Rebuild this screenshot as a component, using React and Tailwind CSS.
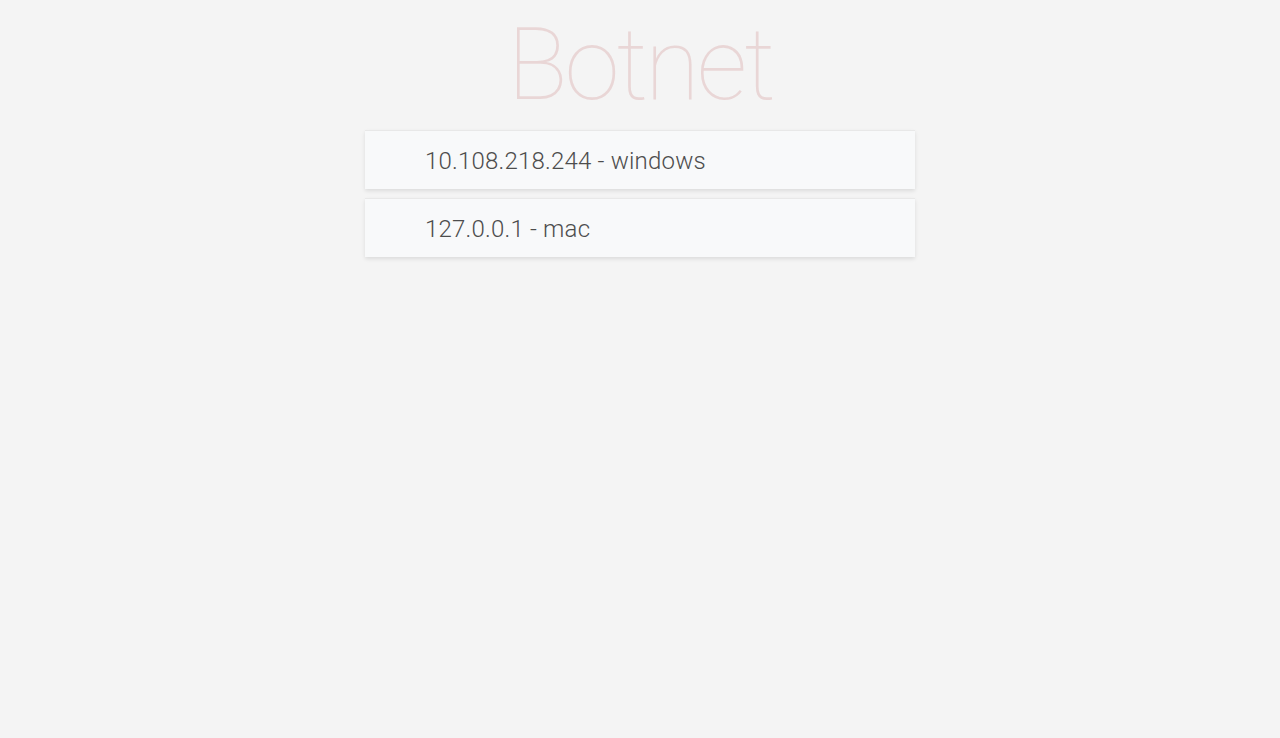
import React from "react";

const bots = [
  { ip: "10.108.218.244", os: "windows" },
  { ip: "127.0.0.1", os: "mac" },
];

const App = () => {
  return (
    <div
      className="min-h-screen bg-[#f4f4f4] text-[#4d4d4d]"
      style={{ fontFamily: "Roboto, 'Liberation Sans', sans-serif" }}
    >
      <div className="mx-auto w-[550px]">
        <h1 className="h-[130px] pt-[5px] text-center text-[100px] font-thin leading-[120px] tracking-[-3px] text-[rgba(175,47,47,0.15)]">
          Botnet
        </h1>
        <ul className="flex flex-col gap-[9px]">
          {bots.map((bot) => (
            <li
              key={bot.ip}
              className="border-t border-[#e8e8e8] bg-[#f8f9fa] pt-[16px] pb-[13px] pl-[60px] pr-[15px] text-[24px] font-light leading-[1.2] tracking-[0.2px] shadow-[0_2px_4px_0_rgba(0,0,0,0.1)]"
            >
              {bot.ip} - {bot.os}
            </li>
          ))}
        </ul>
      </div>
    </div>
  );
};

export default App;
